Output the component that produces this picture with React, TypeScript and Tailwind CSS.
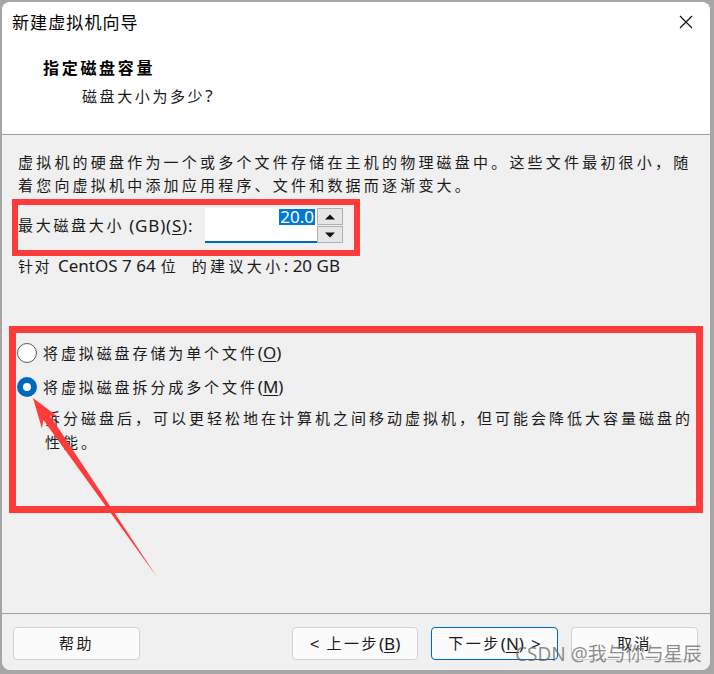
import React from "react";

function Radio({ checked }: { checked?: boolean }) {
  if (checked) {
    return (
      <div className="w-[20px] h-[20px] rounded-full bg-[#0067c0] flex items-center justify-center shrink-0">
        <div className="w-[8px] h-[8px] rounded-full bg-white" />
      </div>
    );
  }
  return <div className="w-[20px] h-[20px] rounded-full border border-[#5a5a5a] bg-white shrink-0" />;
}

function Btn({ children, primary, w }: { children: React.ReactNode; primary?: boolean; w: string }) {
  return (
    <div
      className={`${w} h-[33px] rounded-[4px] border ${
        primary ? "border-[#0067c0]" : "border-[#d0d0d0]"
      } bg-[#fbfbfb] flex items-center justify-center text-[17px] leading-none text-[#1a1a1a] whitespace-nowrap`}
    >
      {children}
    </div>
  );
}

export default function App() {
  return (
    <div className="relative w-[714px] h-[674px] overflow-hidden bg-[#a6a6a6] pt-[2px] pl-[2px] font-['Noto_Sans','Noto_Sans_CJK_SC',sans-serif] text-[#1a1a1a]">
      <div className="w-[708px] h-[668px] rounded-[8px] overflow-hidden bg-[#f0f0f0] flex flex-col">
        {/* Title bar */}
        <div className="h-[40px] shrink-0 bg-white flex items-center justify-between pl-[10px] pr-[17px]">
          <span className="text-[17px] tracking-[1.1px] text-black leading-none">新建虚拟机向导</span>
          <svg width="14" height="14" viewBox="0 0 14 14">
            <path d="M1 1L13 13M13 1L1 13" stroke="#111" strokeWidth="1.2" fill="none" />
          </svg>
        </div>

        {/* Header */}
        <div className="h-[93px] shrink-0 bg-white border-b border-[#a0a0a0] pl-[41px] pt-[15px]">
          <div className="text-[16px] font-bold leading-[22px] tracking-[2.7px] text-black whitespace-nowrap">
            指定磁盘容量
          </div>
          <div className="mt-[6px] pl-[39px] text-[15px] leading-[22px] whitespace-nowrap text-[#1a1a1a]">
            <span className="tracking-[2.6px]">磁盘大小为多少</span>
            <span className="text-[17px]">?</span>
          </div>
        </div>

        {/* Body */}
        <div className="flex-1 pl-[16px] pt-[16px]">
          <div className="text-[15px] leading-[23px] tracking-[3.2px] whitespace-nowrap">
            虚拟机的硬盘作为一个或多个文件存储在主机的物理磁盘中。这些文件最初很小，随
            <br />
            着您向虚拟机中添加应用程序、文件和数据而逐渐变大。
          </div>

          <div className="mt-[11px] flex items-center h-[35px]">
            <div className="w-[187px] shrink-0 whitespace-nowrap flex items-center">
              <span className="text-[15px] tracking-[2.7px]">最大磁盘大小</span>
              <span className="text-[17px] tracking-[0.8px] ml-[5px]">
                (GB)(<span className="underline underline-offset-2">S</span>):
              </span>
            </div>
            <div className="w-[112px] h-[35px] bg-white border-b-2 border-[#0067c0] flex justify-end items-start pt-[1px] pr-[2px]">
              <span className="bg-[#0078d7] text-white text-[17px] leading-[16px] px-[1px]">20.0</span>
            </div>
            <div className="w-[26px] h-[35px] flex flex-col gap-[1px]">
              <div className="h-[17px] border border-[#b0b0b0] bg-[#e6e6e6] flex items-center justify-center">
                <svg width="10" height="6" viewBox="0 0 10 6">
                  <path d="M0 5.5L5 0.5L10 5.5Z" fill="#111" />
                </svg>
              </div>
              <div className="h-[17px] border border-[#b0b0b0] bg-[#e6e6e6] flex items-center justify-center">
                <svg width="10" height="6" viewBox="0 0 10 6">
                  <path d="M0 0.5L5 5.5L10 0.5Z" fill="#111" />
                </svg>
              </div>
            </div>
          </div>

          <div className="mt-[12px] h-[22px] flex items-center whitespace-nowrap text-[17px]">
            <span className="text-[15px] tracking-[1.5px]">针对</span>
            <span className="ml-[7px]">CentOS 7 64</span>
            <span className="ml-[5px] text-[15px]">位</span>
            <span className="ml-[16px] text-[15px] tracking-[3.4px]">的建议大小</span>
            <span>: 20 GB</span>
          </div>

          <div className="mt-[65px] ml-[-1px] flex items-center h-[22px] gap-[6px] whitespace-nowrap">
            <Radio />
            <span>
              <span className="text-[15px] tracking-[2.9px]">将虚拟磁盘存储为单个文件</span>
              <span className="text-[17px]">
                (<span className="underline underline-offset-2">O</span>)
              </span>
            </span>
          </div>

          <div className="mt-[12px] ml-[-1px] flex items-center h-[22px] gap-[6px] whitespace-nowrap">
            <Radio checked />
            <span>
              <span className="text-[15px] tracking-[2.9px]">将虚拟磁盘拆分成多个文件</span>
              <span className="text-[17px]">
                (<span className="underline underline-offset-2">M</span>)
              </span>
            </span>
          </div>

          <div className="mt-[8px] pl-[27px] text-[15px] leading-[24px] tracking-[3px] whitespace-nowrap">
            拆分磁盘后，可以更轻松地在计算机之间移动虚拟机，但可能会降低大容量磁盘的
            <br />
            性能。
          </div>
        </div>

        {/* Footer */}
        <div className="h-[57px] shrink-0 border-t border-[#a0a0a0] pt-[13px] pl-[11px] pr-[12px] flex justify-between items-start">
          <Btn w="w-[127px]">
            <span className="text-[15px] tracking-[2.5px]">帮助</span>
          </Btn>
          <div className="flex gap-[13px]">
            <Btn w="w-[126px]">
              <span className="mr-[7px]">&lt;</span>
              <span className="text-[15px] tracking-[2.5px]">上一步</span>
              <span>
                (<span className="underline underline-offset-2">B</span>)
              </span>
            </Btn>
            <Btn w="w-[127px]" primary>
              <span className="text-[15px] tracking-[2.5px]">下一步</span>
              <span>
                (<span className="underline underline-offset-2">N</span>)
              </span>
              <span className="ml-[7px]">&gt;</span>
            </Btn>
            <Btn w="w-[127px]">
              <span className="text-[15px] tracking-[2.5px]">取消</span>
            </Btn>
          </div>
        </div>
      </div>

      {/* Annotation overlays */}
      <div className="absolute left-[12px] top-[199px] w-[348px] h-[57px] border-[6px] border-[#fe3b3b]" />
      <div className="absolute left-[9px] top-[326px] w-[694px] h-[187px] border-[7px] border-[#fe3b3b]" />
      <svg className="absolute left-0 top-0 pointer-events-none" width="714" height="674" viewBox="0 0 714 674">
        <polygon points="33,398 58.3,417 50,415.4 157,577 43.4,420 41.9,428.4" fill="#fe3b3b" />
      </svg>

      <div className="absolute left-[515px] top-[643px] text-[19px] leading-[22px] whitespace-nowrap text-[rgba(105,105,105,0.75)]">
        CSDN @我与你与星辰
      </div>
    </div>
  );
}
